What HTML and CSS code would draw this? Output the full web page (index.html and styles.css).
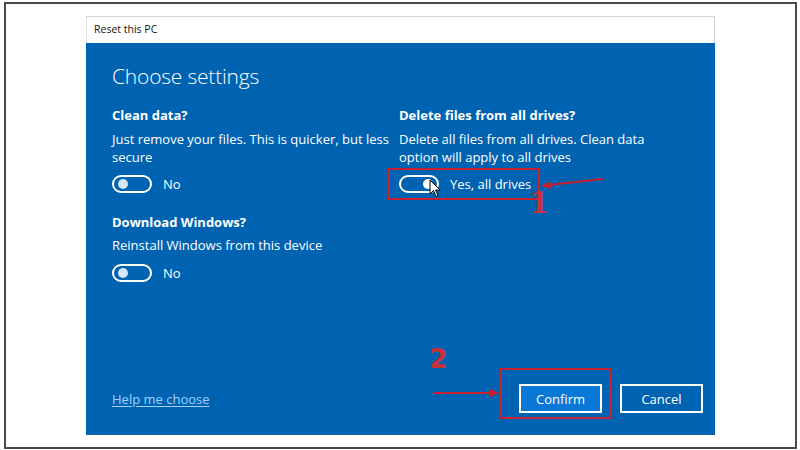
FILE: index.html
```html
<!DOCTYPE html>
<html lang="en">
<head>
    <meta charset="UTF-8">
    <title>Reset this PC</title>
    <link rel="stylesheet" href="styles.css">
</head>
<body>
    <div id="frame">
        <div id="dialog">
            <div class="titlebar">Reset this PC</div>
            <div class="content">
                <h1>Choose settings</h1>
                <div class="grid">
                    <div class="option">
                        <h2>Clean data?</h2>
                        <p>Just remove your files. This is quicker, but less secure</p>
                        <div class="toggle-row">
                            <span class="toggle"><span class="knob"></span></span>
                            <span class="state">No</span>
                        </div>
                    </div>
                    <div class="option right">
                        <h2>Delete files from all drives?</h2>
                        <p>Delete all files from all drives. Clean data option will apply to all drives</p>
                        <div class="toggle-row">
                            <span class="toggle on"><span class="knob"></span></span>
                            <span class="state">Yes, all drives</span>
                        </div>
                    </div>
                    <div class="option second">
                        <h2>Download Windows?</h2>
                        <p>Reinstall Windows from this device</p>
                        <div class="toggle-row">
                            <span class="toggle"><span class="knob"></span></span>
                            <span class="state">No</span>
                        </div>
                    </div>
                </div>
                <div class="footer">
                    <a href="#" class="help">Help me choose</a>
                    <div class="buttons">
                        <button class="btn primary">Confirm</button>
                        <button class="btn">Cancel</button>
                    </div>
                </div>
            </div>

            <!-- annotations -->
            <div class="mark box1"></div>
            <div class="mark box2"></div>
            <span class="num num1">1</span>
            <span class="num num2">2</span>
            <svg class="arrows" width="629" height="419" viewBox="0 0 629 419">
                <line x1="517" y1="162" x2="462" y2="168" stroke="#c8202c" stroke-width="2"/>
                <polygon points="455,169 464,164 465,172" fill="#c8202c"/>
                <line x1="347" y1="376" x2="405" y2="376" stroke="#c8202c" stroke-width="2"/>
                <polygon points="413,376 404,372 404,380" fill="#c8202c"/>
            </svg>
            <svg class="cursor" width="12" height="19" viewBox="0 0 12 19">
                <path d="M1 1 L1 15 L4.5 11.5 L7 17.5 L9 16.6 L6.6 11 L11 11 Z" fill="#fff" stroke="#000" stroke-width="1"/>
            </svg>
        </div>
    </div>
</body>
</html>
```

FILE: styles.css
```css
*{
    padding:0;
    margin:0;
    box-sizing:border-box;
}
html,body{
    width:100%;
    height:100%;
    background-color:#fff;
    font-family:"Open Sans","Noto Sans",sans-serif;
}
#frame{
    margin:2px 3px 0 4px;
    height:447px;
    border:2px solid #4a4a4a;
    padding:12px 0 0 80px;
}
#dialog{
    position:relative;
    width:629px;
    height:419px;
    display:flex;
    flex-direction:column;
    border-top:1px solid #d6d6d6;
}
.titlebar{
    height:26px;
    padding:5px 0 0 7px;
    font-size:10.5px;
    color:#111;
    background:#fff;
    border-right:1px solid #d0d0d0;
    border-left:1px solid #e4e4e4;
}
.content{
    flex:1;
    background:#0063b1;
    color:#fff;
    padding:18px 26px 22px 26px;
    display:flex;
    flex-direction:column;
}
h1{
    font-weight:300;
    font-size:21px;
    line-height:30px;
    letter-spacing:-0.2px;
}
.grid{
    display:grid;
    grid-template-columns:287px 1fr;
    margin-top:15px;
}
.option.second{
    margin-top:20px;
}
h2{
    font-size:13px;
    font-weight:700;
    line-height:18px;
}
.option p{
    font-size:13px;
    line-height:18px;
    margin-top:6px;
    padding-right:4px;
}
.option.right p{
    max-width:262px;
}
.option.second p{
    margin-top:5px;
}
.toggle-row{
    display:flex;
    align-items:center;
    margin-top:9px;
    height:18px;
}
.option.second .toggle-row{
    margin-top:10px;
}
.toggle{
    width:40px;
    height:18px;
    border:2px solid #fff;
    border-radius:9px;
    display:flex;
    align-items:center;
    padding:0 4px;
}
.knob{
    width:10px;
    height:10px;
    border-radius:50%;
    background:#d2e6f8;
}
.toggle.on{
    justify-content:flex-end;
}
.toggle.on .knob{
    background:#fff;
}
.state{
    font-size:13px;
    margin-left:11px;
}
.footer{
    margin-top:auto;
    display:flex;
    align-items:center;
    justify-content:space-between;
}
.help{
    color:#9fd0ff;
    font-size:13px;
    text-decoration:underline;
    text-underline-offset:2px;
}
.buttons{
    display:flex;
    gap:18px;
    margin-right:-14px;
}
.btn{
    width:83px;
    height:29px;
    border:2px solid #fff;
    background:#0063b1;
    color:#fff;
    font-family:"Open Sans","Noto Sans",sans-serif;
    font-size:13px;
}
.btn.primary{
    background:#0a78d7;
}
.mark{
    position:absolute;
    border:2px solid #c8202c;
}
.box1{
    left:302px;
    top:151px;
    width:152px;
    height:32px;
}
.box2{
    left:414px;
    top:351px;
    width:111px;
    height:51px;
}
.num{
    position:absolute;
    color:#c8323a;
    font-weight:700;
    line-height:1;
}
.num1{
    left:443px;
    top:172px;
    font-family:"DejaVu Serif",serif;
    font-size:29px;
}
.num2{
    left:343px;
    top:328px;
    font-family:"DejaVu Sans",sans-serif;
    font-size:27px;
}
.arrows{
    position:absolute;
    left:0;
    top:0;
    pointer-events:none;
}
.cursor{
    position:absolute;
    left:343px;
    top:162px;
}
```
